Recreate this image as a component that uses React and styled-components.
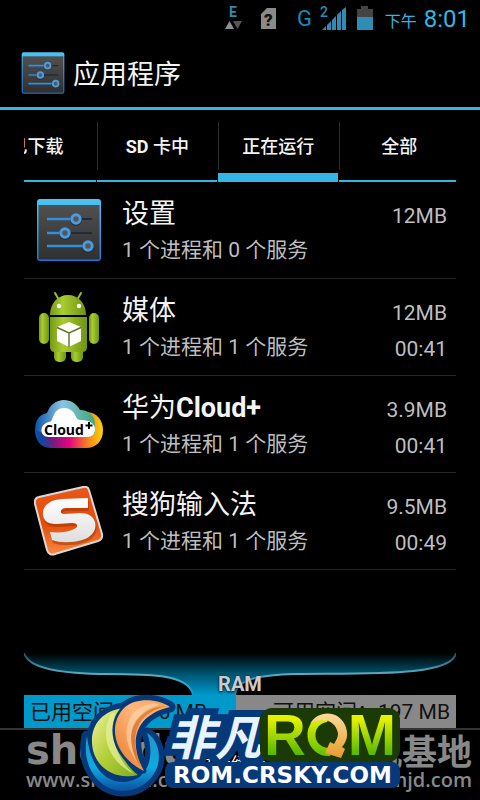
import React from 'react';
import styled, { createGlobalStyle } from 'styled-components';

const COLORS = {
  holo: '#33b5e5',
  holoDark: '#0099cc',
  text: '#f3f3f3',
  muted: '#bebebe',
  line: '#262626',
  gray: '#888888',
  navy: '#06397a',
  forest: '#1c3a06',
};

const APPS = [
  { id: 'settings', name: '设置', summary: '1 个进程和 0 个服务', size: '12MB', time: '' },
  { id: 'media', name: '媒体', summary: '1 个进程和 1 个服务', size: '12MB', time: '00:41' },
  { id: 'cloud', name: '华为', strong: 'Cloud+', summary: '1 个进程和 1 个服务', size: '3.9MB', time: '00:41' },
  { id: 'sogou', name: '搜狗输入法', summary: '1 个进程和 1 个服务', size: '9.5MB', time: '00:49' },
];

const TABS = [
  { label: '已下载' },
  { strong: 'SD', label: ' 卡中' },
  { label: '正在运行', active: true },
  { label: '全部' },
];

const SettingsIcon = ({ size }) => (
  <svg width={size} height={size} viewBox="0 0 66 66" aria-hidden="true">
    <defs>
      <linearGradient id="panel" x1="0" y1="0" x2="0" y2="1">
        <stop offset="0" stopColor="#505050" />
        <stop offset="1" stopColor="#303030" />
      </linearGradient>
      <linearGradient id="rim" x1="0" y1="0" x2="0" y2="1">
        <stop offset="0" stopColor="#4cc4f4" />
        <stop offset="1" stopColor="#1678dc" />
      </linearGradient>
    </defs>
    <rect x="1" y="2" width="64" height="62" rx="3" fill="url(#rim)" />
    <rect x="2.5" y="8" width="61" height="54.5" fill="url(#panel)" />
    <path d="M11 22H56M11 36H56M11 49H56" stroke="#1c2c3c" strokeWidth="2" />
    <path d="M11 22H37M11 36H26M11 49H50" stroke="#2f8fe0" strokeWidth="2.4" />
    {[[40, 22], [29, 36], [52, 49]].map(([x, y]) => (
      <g key={x}>
        <circle cx={x} cy={y + 1} r="6" fill="#222" opacity=".6" />
        <circle cx={x} cy={y} r="4.2" fill="#555" stroke="#4a9be0" strokeWidth="3" />
      </g>
    ))}
  </svg>
);

const AndroidIcon = () => (
  <svg width="66" height="72" viewBox="0 0 66 72" aria-hidden="true">
    <defs>
      <linearGradient id="droid" x1="0" y1="0" x2="1" y2="0">
        <stop offset="0" stopColor="#769a16" />
        <stop offset=".35" stopColor="#a8cc30" />
        <stop offset="1" stopColor="#6f9410" />
      </linearGradient>
    </defs>
    <path d="M19 2l4 7M45 2l-4 7" stroke="#9bbd2a" strokeWidth="2" strokeLinecap="round" />
    <path d="M14 24C14 12 22 4 32 4s18 8 18 20z" fill="url(#droid)" />
    <circle cx="23" cy="15" r="2.2" fill="#fff" />
    <circle cx="43" cy="15" r="2.2" fill="#fff" />
    <rect x="3" y="22" width="10" height="31" rx="5" fill="url(#droid)" />
    <rect x="53" y="22" width="10" height="31" rx="5" fill="url(#droid)" />
    <rect x="18" y="52" width="12" height="19" rx="5" fill="url(#droid)" />
    <rect x="35" y="52" width="12" height="19" rx="5" fill="url(#droid)" />
    <path d="M14 26h37v30q0 5-5 5H19q-5 0-5-5z" fill="url(#droid)" />
    <path d="M33 31l12 5v14l-12 6-12-6V36z" fill="#fff" />
    <path d="M21 36.5l12 5.5 12-5.5M33 42v14" fill="none" stroke="#5d7420" strokeWidth="1.4" />
  </svg>
);

const CloudIcon = () => (
  <svg width="70" height="50" viewBox="0 0 70 50" aria-hidden="true">
    <defs>
      <linearGradient id="warm" x1="0" y1="0" x2="1" y2="0">
        <stop offset=".05" stopColor="#1c2a80" />
        <stop offset=".5" stopColor="#e4057f" />
        <stop offset=".78" stopColor="#f58420" />
        <stop offset="1" stopColor="#ffd400" />
      </linearGradient>
      <linearGradient id="cool" x1="0" y1="0" x2="1" y2="0">
        <stop offset="0" stopColor="#0a54a8" />
        <stop offset=".45" stopColor="#8cc4e4" />
        <stop offset="1" stopColor="#3fa878" />
      </linearGradient>
      <linearGradient id="coolFade" x1="0" y1="0" x2="1" y2="0">
        <stop offset="0" stopColor="#0a54a8" />
        <stop offset="1" stopColor="#0a54a8" stopOpacity="0" />
      </linearGradient>
    </defs>
    <path d="M17 49C6 49 1 40 1 31l50-18c11-1 18 8 18 18 0 11-7 18-17 18z" fill="url(#warm)" />
    <path d="M1 31C1 21 5 16 13 14 16 6 22 1 30 1c7 0 13 4 16 10 9 0 15 6 15 14v9H8z" fill="url(#cool)" />
    <path d="M1 30c0 10 5 19 16 19h6L10 36z" fill="url(#coolFade)" />
    <path d="M15 38c-10 0-10-13 0-15 2 0 3-2 4-5 2-6 6-9 11-9s10 3 12 9c1 2 2 3 5 3 9 0 14 4 14 9s-3 8-8 8z" fill="#fff" />
    <text x="10" y="36" fontFamily="'Open Sans', sans-serif" fontSize="14" fontWeight="700" fill="#000">Cloud</text>
    <path d="M55 23v7M51.500 26.500h7" stroke="#000" strokeWidth="2" />
  </svg>
);

const SogouIcon = () => (
  <svg width="70" height="70" viewBox="0 0 70 70" aria-hidden="true">
    <defs>
      <linearGradient id="orange" x1="0" y1="0" x2="0" y2="1">
        <stop offset="0" stopColor="#e8571c" />
        <stop offset=".55" stopColor="#e44c08" />
        <stop offset="1" stopColor="#f68a44" />
      </linearGradient>
      <linearGradient id="silver" x1="0" y1="0" x2="0" y2="1">
        <stop offset="0" stopColor="#fff" />
        <stop offset="1" stopColor="#dedede" />
      </linearGradient>
      <path id="sShape" d="M54 12L28 13C14 14 8 21 9 29c1 7 6 9 14 9l15-1c6 0 7 4 2 6-5 3-14 4-24 3l2 8c8 3 20 3 30 0 10-3 15-10 13-18-2-6-7-9-15-9l-16 1c-5 0-4-6 2-6L54 22z" />
    </defs>
    <path d="M5 11L49 1q5-1 6 3l13 44q1 5-4 7L21 68q-6 2-8-4L1 18q-1-6 4-7z" fill="url(#orange)" stroke="#d8d8d8" strokeWidth="2" />
    <use href="#sShape" x="1" y="3" fill="#9c3000" opacity=".5" />
    <use href="#sShape" fill="url(#silver)" />
  </svg>
);

const ICONS = {
  settings: <SettingsIcon size={66} />,
  media: <AndroidIcon />,
  cloud: <CloudIcon />,
  sogou: <SogouIcon />,
};

const StatusIcons = () => (
  <svg width="150" height="32" viewBox="0 0 150 32" aria-hidden="true">
    <text x="4" y="16" fontFamily="Roboto, sans-serif" fontSize="14" fontWeight="700" fill="#2b8cb4">E</text>
    <path d="M0 28l4.500-8 4.500 8z" fill="#909090" />
    <path d="M8 20h9l-4.500 8z" fill="#555" />
    <path d="M36 13l6-6h9v21H36z" fill="#8a8a8a" />
    <text x="39" y="25" fontFamily="Roboto, sans-serif" fontSize="17" fontWeight="900" fill="#111">?</text>
    <text x="72" y="25" fontFamily="Roboto, sans-serif" fontSize="22" fill="#168ab8">G</text>
    <text x="95" y="16" fontFamily="Roboto, sans-serif" fontSize="14" fontWeight="500" fill="#2b8cb4">2</text>
    <path d="M97 29l4-4v4zM102 24l4-4v9h-4zM107 19l4-4v14h-4zM112 14l4-4v19h-4zM117 9l4-3v23h-4z" fill="#2f8db5" />
    <path d="M132 8h4V5h7v3h5v9h-16z" fill="#444" />
    <path d="M132 16h16v13h-16z" fill="#2f8db5" />
  </svg>
);

const SwirlLogo = () => (
  <svg width="100" height="108" viewBox="0 0 100 108" aria-hidden="true">
    <defs>
      <linearGradient id="lime" x1="0" y1="0" x2="1" y2="1">
        <stop offset="0" stopColor="#eef3a0" />
        <stop offset=".5" stopColor="#b4cf38" />
        <stop offset="1" stopColor="#7dac20" />
      </linearGradient>
      <linearGradient id="peach" x1="1" y1="0" x2="0" y2="1">
        <stop offset="0" stopColor="#f0a050" />
        <stop offset=".4" stopColor="#ffb87c" />
        <stop offset="1" stopColor="#e87828" />
      </linearGradient>
      <linearGradient id="ocean" x1="0" y1="0" x2="0" y2="1">
        <stop offset="0" stopColor="#1f96cc" />
        <stop offset=".6" stopColor="#10a8e0" />
        <stop offset="1" stopColor="#0c50a0" />
      </linearGradient>
      <path id="ring" d="M8 44C2 72 18 98 43 99c25 0 41-22 36-42-2-8-6-13-11-16 7 18 5 46-22 49C24 91 11 72 8 44z" />
      <path id="leaf" d="M44 16C24 19 12 32 13 51c1 23 22 38 46 32C40 69 30 38 44 16z" />
      <path id="flame" d="M91 15C80 7 58 5 46 15 28 32 34 64 65 79 51 54 52 24 91 15z" />
    </defs>
    <g fill={COLORS.navy} stroke={COLORS.navy} strokeWidth="11" strokeLinejoin="round">
      <use href="#ring" />
      <use href="#leaf" />
      <use href="#flame" />
    </g>
    <g stroke={COLORS.navy} strokeWidth="5" paintOrder="stroke" strokeLinejoin="round">
      <use href="#ring" fill="url(#ocean)" />
      <use href="#leaf" fill="url(#lime)" />
    </g>
    <path d="M32 22C20 44 30 70 55 82 38 68 30 44 36 20z" fill="#eaf2a0" opacity=".7" />
    <use href="#flame" fill="url(#peach)" stroke={COLORS.navy} strokeWidth="5" paintOrder="stroke" strokeLinejoin="round" />
    <path d="M86 14C58 16 40 42 62 75 49 44 58 22 86 14z" fill="#cf601c" opacity=".6" />
    <path d="M76 11C48 14 38 42 58 70 45 40 54 20 80 13z" fill="#fcd9b4" opacity=".6" />
  </svg>
);

const RingArrow = () => (
  <svg width="42" height="46" viewBox="0 0 42 46" aria-hidden="true">
    <defs>
      <linearGradient id="ringGreen" x1="0" y1="0" x2="0" y2="1">
        <stop offset="0" stopColor="#e4f200" />
        <stop offset="1" stopColor="#6cc400" />
      </linearGradient>
      <linearGradient id="ringGold" x1="0" y1="0" x2="0" y2="1">
        <stop offset="0" stopColor="#fbdc98" />
        <stop offset="1" stopColor="#e89a2c" />
      </linearGradient>
    </defs>
    <path d="M24 40A17 17 0 1 1 21 6" fill="none" stroke="url(#ringGreen)" strokeWidth="8" />
    <path d="M4 12C12-2 32-2 39 13c4 9 2 16-3 22l3 2-4 9-16-5 5-11 4 2c4-6 5-10 3-14C27 7 14 6 4 12z" fill="url(#ringGold)" />
  </svg>
);

const Funnel = () => (
  <FunnelSvg viewBox="0 0 432 42" preserveAspectRatio="none" aria-hidden="true">
    <defs>
      <linearGradient id="funnel" x1="0" y1="0" x2="0" y2="1">
        <stop offset="0" stopColor="#000" />
        <stop offset=".5" stopColor="#005470" />
        <stop offset="1" stopColor={COLORS.holoDark} />
      </linearGradient>
      <linearGradient id="edge" x1="0" y1="0" x2="0" y2="1">
        <stop offset="0" stopColor="#14505f" />
        <stop offset=".5" stopColor="#62a9bd" />
        <stop offset="1" stopColor={COLORS.holoDark} />
      </linearGradient>
    </defs>
    <path d="M0 0C4 14 30 20 75 21 120 21 165 20 169 42H211C212 30 225 22 270 21 340 20 428 24 432 0z" fill="url(#funnel)" />
    <path d="M0 0C4 14 30 20 75 21 120 21 165 20 169 42M211 42C212 30 225 22 270 21 340 20 428 24 432 0" fill="none" stroke="url(#edge)" strokeWidth="2" />
  </FunnelSvg>
);

const App = () => (
  <Screen>
    <GlobalStyle />
    <StatusBar>
      <StatusIcons />
      <Clock><small>下午</small>8:01</Clock>
    </StatusBar>
    <Header>
      <SettingsIcon size={44} />
      <Title>应用程序</Title>
    </Header>
    <TabStrip role="tablist">
      {TABS.map(({ strong, label, active = false }) => (
        <Tab key={label} role="tab" aria-selected={active} $active={active}>
          {strong && <b>{strong}</b>}{label}
        </Tab>
      ))}
    </TabStrip>
    <AppList>
      {APPS.map((app) => (
        <AppRow key={app.id}>
          <IconCell>{ICONS[app.id]}</IconCell>
          <Details>
            <Name>{app.name}{app.strong && <b>{app.strong}</b>}</Name>
            <Summary>{app.summary}</Summary>
          </Details>
          <Usage>
            <Summary>{app.size}</Summary>
            <Summary>{app.time}</Summary>
          </Usage>
        </AppRow>
      ))}
    </AppList>
    <Ram>
      <Funnel />
      <RamLabel>RAM</RamLabel>
      <RamBar>
        <Used>已用空间：206 MB</Used>
        <Free>可用空间：197 MB</Free>
      </RamBar>
    </Ram>
    <BottomBar>
      <Site>
        <SiteName $wide>shendu</SiteName>
        <SiteUrl>www.shendu.com</SiteUrl>
      </Site>
      <CachedButton>显示缓存进程</CachedButton>
      <Site $right>
        <SiteName>刷机基地</SiteName>
        <SiteUrl>www.romjd.com</SiteUrl>
      </Site>
    </BottomBar>
    <Watermark>
      <SwirlLogo />
      <Words>
        <Brand>
          <BrandCjk>非凡</BrandCjk>
          <BrandRom>
            <Letter>R</Letter>
            <RingArrow />
            <Letter>M</Letter>
          </BrandRom>
        </Brand>
        <Domain>ROM.CRSKY.COM</Domain>
      </Words>
    </Watermark>
  </Screen>
);

const GlobalStyle = createGlobalStyle`
  * {
    box-sizing: border-box;
  }

  body {
    margin: 0;
    background: #000;
    color: ${COLORS.text};
    font-family: Roboto, 'Noto Sans CJK SC', sans-serif;
  }

  svg {
    display: block;
    flex: none;
  }
`;

const Screen = styled.div`
  position: relative;
  display: flex;
  flex-direction: column;
  min-height: 100vh;
  overflow: hidden;
`;

const StatusBar = styled.div`
  display: flex;
  justify-content: flex-end;
  gap: 10px;
  height: 38px;
  padding: 1px 10px 0 0;
`;

const Clock = styled.div`
  display: flex;
  align-items: baseline;
  gap: 7px;
  color: ${COLORS.holo};
  font-size: 24px;
  line-height: 36px;

  small {
    font-size: 16px;
  }
`;

const Header = styled.header`
  display: flex;
  align-items: center;
  gap: 8px;
  height: 72px;
  padding-left: 21px;
  border-bottom: 3px solid ${COLORS.holo};
`;

const Title = styled.h1`
  margin: 0;
  padding-top: 4px;
  font-size: 27px;
  font-weight: 400;
  line-height: 36px;
`;

const TabStrip = styled.div`
  display: flex;
  height: 72px;
  margin: 0 24px;
  overflow: hidden;
`;

const Tab = styled.button`
  flex: 0 0 28%;
  padding: 2px 1px 0 0;
  border: 0;
  background:
    linear-gradient(#2c2c2c, #2c2c2c) 0 12px / 1px 48px no-repeat,
    linear-gradient(${COLORS.holo}, ${COLORS.holo}) 0 100% / calc(100% - 1px) ${({ $active }) => ($active ? 9 : 2)}px no-repeat;
  color: ${COLORS.text};
  font: 500 18px/24px Roboto, 'Noto Sans CJK SC', sans-serif;
  white-space: nowrap;

  &:first-child {
    margin-left: -11%;
  }
`;

const AppList = styled.ul`
  margin: 0 24px;
  padding: 0;
  list-style: none;
`;

const AppRow = styled.li`
  display: flex;
  height: 97px;
  padding-right: 9px;
  border-bottom: 1px solid ${COLORS.line};
`;

const IconCell = styled.div`
  display: flex;
  align-items: center;
  justify-content: center;
  width: 90px;
  margin-right: 8px;
`;

const Details = styled.div`
  flex: 1;
  padding-top: 14px;
`;

const Name = styled.div`
  font-size: 27px;
  line-height: 36px;
`;

const Summary = styled.div`
  color: ${COLORS.muted};
  font-size: 21px;
  line-height: 36px;
`;

const Usage = styled.div`
  padding-top: 16px;
  text-align: right;
`;

const Ram = styled.section`
  position: relative;
  margin: auto 24px 0;
`;

const FunnelSvg = styled.svg`
  width: 100%;
  height: 42px;
`;

const RamLabel = styled.div`
  position: absolute;
  top: 18px;
  width: 100%;
  color: #ccc;
  font-size: 20px;
  font-weight: 700;
  line-height: 26px;
  text-align: center;
  text-shadow: 0 1px 3px #000;
`;

const RamBar = styled.div`
  display: flex;
  height: 33px;
  color: #111;
  font-size: 21px;
  line-height: 35px;
  white-space: nowrap;
`;

const Used = styled.div`
  width: 49%;
  padding-left: 6px;
  background: ${COLORS.holoDark};
`;

const Free = styled.div`
  flex: 1;
  padding-right: 6px;
  background: ${COLORS.gray};
  text-align: right;
`;

const BottomBar = styled.footer`
  display: flex;
  justify-content: space-between;
  height: 72px;
  padding: 0 8px 0 26px;
  border-top: 2px solid #333;
`;

const CachedButton = styled.button`
  padding: 0;
  border: 0;
  background: none;
  color: ${COLORS.text};
  font: 18px/24px Roboto, 'Noto Sans CJK SC', sans-serif;
`;

const Site = styled.div`
  display: flex;
  flex-direction: column;
  align-items: ${({ $right }) => ($right ? 'flex-end' : 'flex-start')};
  width: 148px;
  color: ${COLORS.gray};
  white-space: nowrap;
`;

const SiteName = styled.div`
  font-family: ${({ $wide }) => ($wide ? "'DejaVu Sans'" : "'Noto Sans CJK SC'")}, sans-serif;
  font-size: ${({ $wide }) => ($wide ? 40 : 35)}px;
  font-weight: 700;
  line-height: 40px;
`;

const SiteUrl = styled.div`
  font-family: 'Open Sans', sans-serif;
  font-size: 20px;
  font-weight: 600;
  line-height: 20px;
`;

const Watermark = styled.div`
  position: absolute;
  bottom: 0;
  left: 79px;
  display: flex;
  align-items: flex-end;
`;

const Words = styled.div`
  margin: 0 0 12px -14px;
`;

const Brand = styled.div`
  display: flex;
  align-items: center;
`;

const BrandCjk = styled.div`
  padding-left: 3px;
  color: #e8f4ff;
  font-family: 'Noto Sans CJK SC', sans-serif;
  font-size: 47px;
  font-style: italic;
  font-weight: 700;
  line-height: 54px;
  paint-order: stroke fill;
  -webkit-text-stroke: 14px ${COLORS.navy};
  stroke-linejoin: round;
`;

const BrandRom = styled.div`
  display: flex;
  align-items: center;
  justify-content: center;
  width: 140px;
  height: 54px;
  margin-left: -2px;
  border-radius: 12px;
  background: ${COLORS.forest};
`;

const Letter = styled.span`
  background: linear-gradient(#e4f200 20%, #58b800 85%);
  background-clip: text;
  color: transparent;
  font-family: 'Liberation Sans', sans-serif;
  font-size: 58px;
  font-weight: 700;
  line-height: 54px;
`;

const Domain = styled.div`
  height: 26px;
  border-radius: 8px;
  background: ${COLORS.navy};
  color: #fff;
  font-family: 'DejaVu Sans', sans-serif;
  font-size: 23px;
  font-weight: 700;
  line-height: 26px;
  text-align: center;
`;

export default App;
